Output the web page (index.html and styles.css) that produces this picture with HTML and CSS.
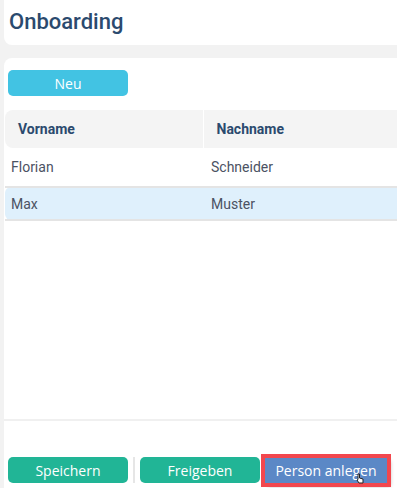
FILE: index.html
```html
<!DOCTYPE html>
<html>
<head lang="de">
    <meta charset="UTF-8">
    <title>Onboarding</title>
    <link rel="stylesheet" href="styles.css">
</head>
<body>
<div class="page">
    <div class="header">
        <h1 class="title">Onboarding</h1>
    </div>
    <div class="card">
        <div class="toolbar">
            <button class="btn btn-cyan">Neu</button>
        </div>
        <table class="grid">
            <tr>
                <th class="col-first">Vorname</th>
                <th>Nachname</th>
            </tr>
            <tr>
                <td>Florian</td>
                <td>Schneider</td>
            </tr>
            <tr class="selected">
                <td>Max</td>
                <td>Muster</td>
            </tr>
        </table>
        <div class="spacer"></div>
        <div class="footer">
            <button class="btn btn-green">Speichern</button>
            <span class="divider"></span>
            <button class="btn btn-green">Freigeben</button>
            <button class="btn btn-blue">Person anlegen</button>
            <svg class="cursor" width="10" height="12" viewBox="0 0 10 12">
                <path d="M3 1 L4.5 1 L4.5 5 L8 6 L8 10 L4 10 L2 7 L3 6.5 Z" fill="#fff" stroke="#222" stroke-width="1"/>
            </svg>
        </div>
    </div>
</div>
</body>
</html>
```

FILE: styles.css
```css
*{
    margin: 0;
    padding: 0;
    box-sizing: border-box;
}
body {
    background-color: #f2f2f2;
    overflow: hidden;
    height: 488px;
}
.page {
    height: 488px;
    padding-left: 4px;
    display: flex;
    flex-direction: column;
}
.header {
    background-color: #fff;
    height: 45px;
    border-radius: 0 0 0 8px;
    padding: 9px 0 0 5px;
    flex-shrink: 0;
}
.title {
    font: 500 22px Roboto, "Liberation Sans", sans-serif;
    color: #2b4a6e;
}
.card {
    background-color: #fff;
    margin-top: 13px;
    border-radius: 8px 0 0 0;
    flex: 1;
    display: flex;
    flex-direction: column;
    padding-left: 4px;
}
.toolbar {
    padding-top: 12px;
    height: 52px;
}
.btn {
    border: none;
    border-radius: 5px;
    width: 120px;
    height: 26px;
    color: #fff;
    font: 14px "Open Sans", "Liberation Sans", sans-serif;
}
.btn-cyan {
    background-color: #42c3e3;
}
.btn-green {
    background-color: #21b596;
}
.btn-blue {
    background-color: #5b88c6;
    border-radius: 0;
    width: 122px;
    height: 25px;
    outline: 4px solid #f2474e;
    box-shadow: 3px 3px 4px rgba(0, 0, 0, 0.35);
}
.grid {
    margin-left: -3px;
    width: calc(100% + 3px);
    border-collapse: collapse;
    border-spacing: 0;
    font-family: Roboto, "Liberation Sans", sans-serif;
    font-size: 14px;
}
th {
    background-color: #f4f4f4;
    height: 38px;
    text-align: left;
    font-weight: bold;
    color: #2b4a6e;
    padding-left: 13px;
}
th:first-child {
    border-radius: 8px 0 0 8px;
}
.col-first {
    width: 198px;
    border-right: 1px solid #fff;
}
td {
    height: 39px;
    color: #4b5263;
    padding-left: 6px;
    border-bottom: 2px solid #e4e4e4;
}
td + td {
    padding-left: 8px;
}
.selected td {
    height: 33px;
    background-color: #dff0fc;
}
.selected td:first-child {
    border-radius: 6px 0 0 6px;
}
.spacer {
    flex: 1;
    border-bottom: 2px solid #f0f0f0;
    margin-left: -4px;
}
.footer {
    height: 67px;
    display: flex;
    align-items: flex-start;
    padding-top: 36px;
    position: relative;
}
.divider {
    width: 2px;
    height: 26px;
    background-color: #e6e6e6;
    margin: 0 5px;
}
.footer .btn-blue {
    margin-left: 5px;
    margin-top: 1px;
}
.cursor {
    position: absolute;
    left: 347px;
    top: 52px;
}
```
